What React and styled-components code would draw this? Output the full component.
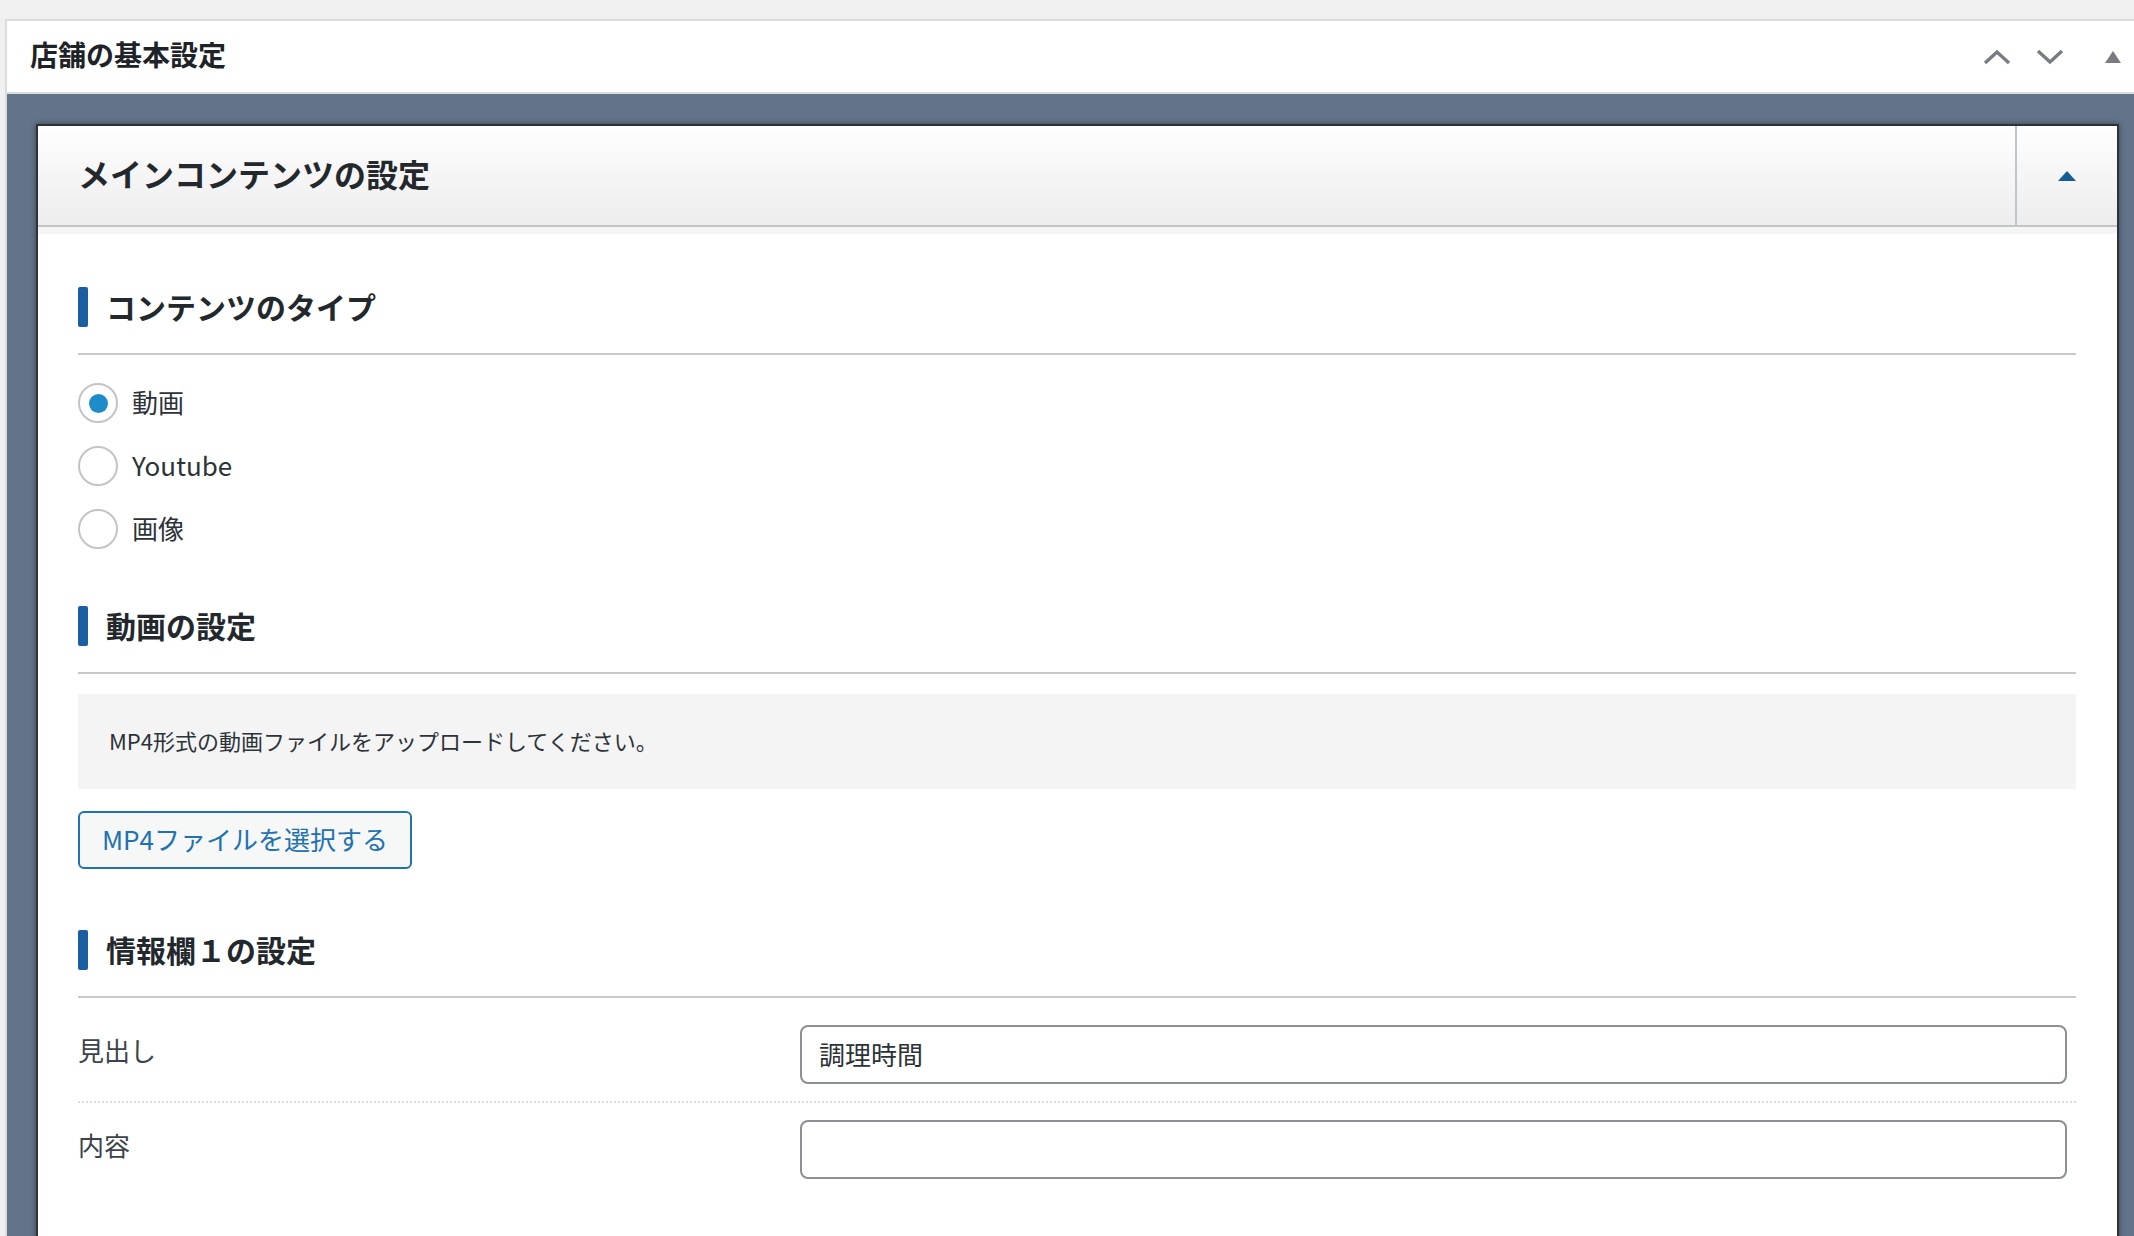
import React from "react";
import styled, {createGlobalStyle} from "styled-components";

const GlobalStyle = createGlobalStyle`
  body {
    margin: 0;
    background-color: #f0f0f1;
    font-family: "Noto Sans CJK JP", "Noto Sans", sans-serif;
    color: #1d2327;
  }
`;

const contentTypes = [
  {value: "movie", label: "動画"},
  {value: "youtube", label: "Youtube"},
  {value: "image", label: "画像"},
];

function ChevronUp() {
  return (
    <svg width="28" height="16" viewBox="0 0 28 16">
      <polyline points="2,14 14,3 26,14" fill="none" stroke="#787c82" strokeWidth="3.4" />
    </svg>
  );
}

function ChevronDown() {
  return (
    <svg width="28" height="16" viewBox="0 0 28 16">
      <polyline points="2,2 14,13 26,2" fill="none" stroke="#787c82" strokeWidth="3.4" />
    </svg>
  );
}

function App() {
  const [type, setType] = React.useState("movie");
  const [heading, setHeading] = React.useState("調理時間");
  const [body, setBody] = React.useState("");

  return (
    <Page>
      <GlobalStyle />
      <Postbox>
        <PostboxHeader>
          <PostboxTitle>店舗の基本設定</PostboxTitle>
          <HandleActions>
            <HandleButton $space={0}>
              <ChevronUp />
            </HandleButton>
            <HandleButton $space={25}>
              <ChevronDown />
            </HandleButton>
            <HandleButton $space={41}>
              <GrayTriangle />
            </HandleButton>
          </HandleActions>
        </PostboxHeader>
        <Inside>
          <MetaBox>
            <MetaHeader>
              <MetaTitle>メインコンテンツの設定</MetaTitle>
              <ToggleCell>
                <BlueTriangle />
              </ToggleCell>
            </MetaHeader>
            <Strip />
            <Content>
              <SectionTitle>
                <Bar />
                <TitleText>コンテンツのタイプ</TitleText>
              </SectionTitle>
              <RadioList>
                {contentTypes.map((item) => (
                  <RadioRow key={item.value} onClick={() => setType(item.value)}>
                    <RadioCircle $checked={type === item.value} />
                    <RadioLabel>{item.label}</RadioLabel>
                  </RadioRow>
                ))}
              </RadioList>

              <SectionTitle $top={57}>
                <Bar />
                <TitleText>動画の設定</TitleText>
              </SectionTitle>
              <Notice>MP4形式の動画ファイルをアップロードしてください。</Notice>
              <SelectButton type="button">MP4ファイルを選択する</SelectButton>

              <SectionTitle $top={61}>
                <Bar />
                <TitleText>情報欄１の設定</TitleText>
              </SectionTitle>
              <FormTable>
                <FormRow>
                  <FieldLabel>見出し</FieldLabel>
                  <FieldCell>
                    <TextInput value={heading} onChange={(e) => setHeading(e.target.value)} />
                  </FieldCell>
                </FormRow>
                <FormRow $last>
                  <FieldLabel>内容</FieldLabel>
                  <FieldCell>
                    <TextInput value={body} onChange={(e) => setBody(e.target.value)} />
                  </FieldCell>
                </FormRow>
              </FormTable>
            </Content>
          </MetaBox>
        </Inside>
      </Postbox>
    </Page>
  );
}

const Page = styled.div`
  padding: 19px 0 0 5px;
  height: 1217px;
  overflow: hidden;
`;

const Postbox = styled.div`
  border-top: 2px solid #dcdcde;
  border-left: 2px solid #dcdcde;
  background-color: #fff;
`;

const PostboxHeader = styled.div`
  display: flex;
  align-items: center;
  justify-content: space-between;
  height: 71px;
  padding-left: 23px;
  border-bottom: 2px solid #dcdcde;
`;

const PostboxTitle = styled.h2`
  margin: 0 0 5px;
  font-size: 28px;
  font-weight: 700;
  line-height: 1;
`;

const HandleActions = styled.div`
  display: flex;
  align-items: center;
  padding-right: 13px;
`;

const HandleButton = styled.span`
  display: flex;
  align-items: center;
  justify-content: center;
  margin-left: ${(p) => p.$space}px;
`;

const GrayTriangle = styled.span`
  width: 0;
  height: 0;
  border-left: 8px solid transparent;
  border-right: 8px solid transparent;
  border-bottom: 12px solid #787c82;
`;

const Inside = styled.div`
  background-color: #637389;
  padding: 30px 15px 0 29px;
`;

const MetaBox = styled.div`
  border: 2px solid #2c3338;
  box-shadow: 0 0 6px rgba(0, 0, 0, 0.4);
  background-color: #fff;
  min-height: 1200px;
`;

const MetaHeader = styled.div`
  display: flex;
  height: 99px;
  border-bottom: 2px solid #c3c4c7;
  background: linear-gradient(#fefefe, #ededed);
`;

const MetaTitle = styled.h3`
  flex: 1;
  display: flex;
  align-items: center;
  margin: 0;
  padding: 0 0 5px 40px;
  font-size: 32px;
  font-weight: 700;
  color: #23282d;
`;

const ToggleCell = styled.div`
  width: 100px;
  display: flex;
  align-items: center;
  justify-content: center;
  border-left: 2px solid #c3c4c7;
`;

const BlueTriangle = styled.span`
  width: 0;
  height: 0;
  border-left: 9px solid transparent;
  border-right: 9px solid transparent;
  border-bottom: 10px solid #135e96;
`;

const Strip = styled.div`
  height: 7px;
  background-color: #f5f5f5;
`;

const Content = styled.div`
  padding: 53px 41px 0 40px;
`;

const SectionTitle = styled.h4`
  display: flex;
  align-items: center;
  gap: 18px;
  height: 40px;
  margin: ${(p) => p.$top || 0}px 0 0;
  padding-bottom: 26px;
  border-bottom: 2px solid #c8c8c8;
  font-size: 30px;
  font-weight: 700;
  line-height: 1;
  color: #23282d;
`;

const TitleText = styled.span`
  padding-bottom: 3px;
`;

const Bar = styled.span`
  width: 10px;
  height: 40px;
  border-radius: 2px;
  background-color: #1a5fa2;
`;

const RadioList = styled.div`
  display: flex;
  flex-direction: column;
  gap: 23px;
  padding-top: 28px;
`;

const RadioRow = styled.label`
  display: flex;
  align-items: center;
  gap: 14px;
  height: 40px;
  cursor: pointer;
`;

const RadioCircle = styled.span`
  box-sizing: border-box;
  width: 40px;
  height: 40px;
  border: 2px solid #c3c4c7;
  border-radius: 50%;
  display: flex;
  align-items: center;
  justify-content: center;

  &::after {
    content: "";
    display: ${(p) => (p.$checked ? "block" : "none")};
    width: 19px;
    height: 19px;
    border-radius: 50%;
    background-color: #1e8cc8;
  }
`;

const RadioLabel = styled.span`
  padding-bottom: 3px;
  font-size: 26px;
  line-height: 1;
  color: #2c3338;
`;

const Notice = styled.div`
  display: flex;
  align-items: center;
  box-sizing: border-box;
  height: 95px;
  margin-top: 20px;
  padding: 0 0 4px 31px;
  background-color: #f4f4f4;
  font-size: 22px;
  color: #2c3338;
`;

const SelectButton = styled.button`
  display: flex;
  align-items: center;
  height: 58px;
  margin-top: 22px;
  padding: 0 22px 3px;
  border: 2px solid #2271b1;
  border-radius: 6px;
  background-color: #f6f7f7;
  color: #2271b1;
  font-family: inherit;
  font-size: 26px;
  cursor: pointer;
`;

const FormTable = styled.div`
  margin-top: 10px;
`;

const FormRow = styled.div`
  display: grid;
  grid-template-columns: 722px 1fr;
  align-items: center;
  padding: 17px 9px 17px 0;
  border-bottom: ${(p) => (p.$last ? "none" : "2px dotted #dcdcde")};
`;

const FieldLabel = styled.div`
  padding-bottom: 10px;
  font-size: 26px;
  color: #3c434a;
`;

const FieldCell = styled.div`
  display: flex;
`;

const TextInput = styled.input`
  box-sizing: border-box;
  flex: 1;
  height: 59px;
  padding: 0 17px 3px;
  border: 2px solid #8c8f94;
  border-radius: 8px;
  font-family: inherit;
  font-size: 26px;
  color: #2c3338;
  outline: none;
`;

export default App;
